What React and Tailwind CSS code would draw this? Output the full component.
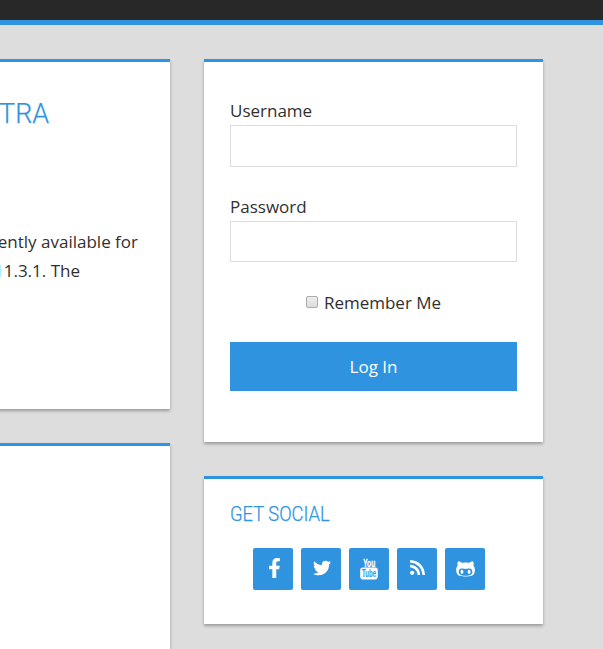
import React from "react";
import { FaFacebookF, FaTwitter, FaRss, FaGithubAlt } from "react-icons/fa";

const card =
  "bg-white border-t-[3px] border-[#2f93df] shadow-[0_2px_3px_rgba(0,0,0,0.3)]";

function YouTubeStacked() {
  return (
    <svg className="overflow-visible" width="18" height="22" viewBox="0 0 18 22" fontFamily='"Liberation Sans Narrow", "Liberation Sans", Arial, sans-serif' fontWeight="700">
      <text x="3.2" y="8.6" fontSize="11" fill="#fff" stroke="#fff" strokeWidth="0.3" textLength="12" lengthAdjust="spacingAndGlyphs">You</text>
      <rect x="0.2" y="9.4" width="17.6" height="12" rx="2.8" fill="#fff" />
      <text x="2" y="19.1" fontSize="10" fill="#2f93df" textLength="14" lengthAdjust="spacingAndGlyphs">Tube</text>
    </svg>
  );
}

function SocialTile({ label, children }) {
  return (
    <a aria-label={label} className="flex h-[42px] w-10 items-center justify-center rounded-[2px] bg-[#2f93df] text-white">
      {children}
    </a>
  );
}

function Field({ label, type, box }) {
  return (
    <label className="block">
      <span className="block h-[29px]">{label}</span>
      <input type={type} className={`block w-full border border-[#dddddd] bg-white outline-none ${box}`} />
    </label>
  );
}

export default function App() {
  return (
    <div className="h-[649px] w-[603px] overflow-hidden bg-[#dddddd] font-['Open_Sans',sans-serif] text-[17px] leading-[29px] text-[#303030]">
      <header className="h-[25px] border-b-[5px] border-[#2f93df] bg-[#282828]" />
      <main className="flex gap-[34px] pt-[34px]">
        <div className="-ml-5 flex w-[190px] shrink-0 flex-col gap-[34px]">
          <article className={`h-[350px] pl-5 pt-[34px] ${card}`}>
            <div className="flex w-[49px] justify-end">
              <h2 className="origin-right scale-x-[0.96] whitespace-nowrap font-[Roboto] text-[28px] font-light leading-[36px] tracking-[0px] text-[#2f93df] [-webkit-text-stroke:0.25px_#2f93df]">TRA</h2>
            </div>
            <div className="mt-[95px] flex w-[138px] justify-end whitespace-nowrap">ently available for</div>
            <div className="flex w-20 justify-end whitespace-nowrap">11.3.1. The</div>
          </article>
          <article className={`h-[240px] ${card}`} />
        </div>
        <aside className="flex w-[339px] shrink-0 flex-col gap-[34px]">
          <section className={`h-[383px] px-[26px] pt-[34px] ${card}`}>
            <Field label="Username" type="text" box="h-[42px]" />
            <div className="h-[25px]" />
            <Field label="Password" type="password" box="h-[41px]" />
            <label className="mt-[26px] flex h-[29px] items-center justify-center gap-[6px]">
              <input type="checkbox" className="-mt-0.5 h-3 w-3 appearance-none rounded-[2px] border border-[#acacac] bg-linear-to-b from-[#eeeeee] to-[#dcdcdc]" />
              <span>Remember Me</span>
            </label>
            <button className="mt-[25px] block h-[49px] w-full bg-[#2f93df] text-white">Log In</button>
          </section>
          <section className={`h-[148px] px-[26px] pt-5 ${card}`}>
            <h3 className="h-[30px] origin-left scale-x-[0.918] whitespace-nowrap font-[Roboto] text-[20px] font-light leading-[31px] text-[#2f93df] [-webkit-text-stroke:0.25px_#2f93df]">GET SOCIAL</h3>
            <div className="mt-[19px] flex gap-2 pl-[23px]">
              <SocialTile label="Facebook"><FaFacebookF className="-mt-0.5 ml-0.5 h-5 w-[13px]" /></SocialTile>
              <SocialTile label="Twitter"><FaTwitter className="-mt-0.5 ml-0.5 h-[18px] w-[18px]" /></SocialTile>
              <SocialTile label="YouTube"><YouTubeStacked /></SocialTile>
              <SocialTile label="RSS"><FaRss className="-mt-[3px] ml-px h-[17px] w-[17px]" /></SocialTile>
              <SocialTile label="GitHub"><FaGithubAlt className="ml-px h-5 w-[21px]" /></SocialTile>
            </div>
          </section>
        </aside>
      </main>
    </div>
  );
}
